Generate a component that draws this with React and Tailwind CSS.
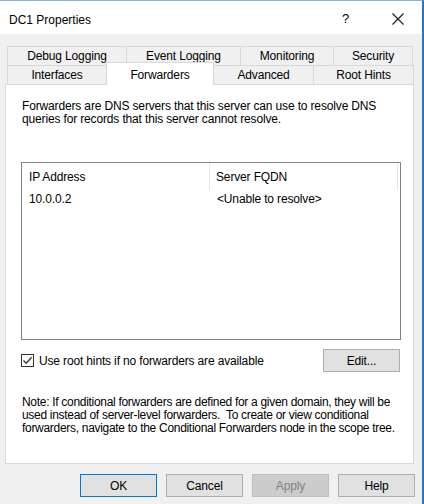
import React from "react";

const F = { fontFamily: '"Liberation Sans", Arial, sans-serif' };

function Tab({ w, children, selected }) {
  if (selected) {
    return (
      <div className={`${w} h-[23px] -mt-[3px] bg-white border border-b-0 border-[#d9d9d9] flex items-start justify-center pt-[3px] relative z-10 -mb-px`}>
        {children}
      </div>
    );
  }
  return (
    <div className={`${w} h-[20px] bg-[#f0f0f0] border border-[#d9d9d9] -ml-px first:ml-0 flex items-center justify-center`}>
      {children}
    </div>
  );
}

function Btn({ children, primary, disabled, w = "w-[77px]" }) {
  return (
    <div
      className={`${w} h-[23px] flex items-center justify-center border ${
        primary
          ? "border-[#0078d7] bg-[#e1e1e1] text-black"
          : disabled
          ? "border-[#bfbfbf] bg-[#cccccc] text-[#838383]"
          : "border-[#adadad] bg-[#e1e1e1] text-black"
      }`}
    >
      {children}
    </div>
  );
}

export default function App() {
  return (
    <div
      style={F}
      className="w-[424px] h-[504px] bg-[#f0f0f0] text-[12px] tracking-[-0.15px] text-black border-t border-t-[#7fb2e5] border-r-2 border-r-[#1979ca] overflow-hidden whitespace-nowrap"
    >
      {/* title bar */}
      <div className="h-[33px] bg-white flex items-center pl-[9px] pr-[16px]">
        <span className="text-[12px] mt-[4px] tracking-normal">DC1 Properties</span>
        <span className="ml-auto mr-[43px] text-[13px] mt-[2px]">?</span>
        <svg width="12" height="12" viewBox="0 0 12 12" className="mt-[2px] mr-[2px]">
          <path d="M0.5 0.5 L11.5 11.5 M11.5 0.5 L0.5 11.5" stroke="#1a1a1a" strokeWidth="1.1" />
        </svg>
      </div>

      {/* tabs */}
      <div className="pl-[7px] pt-[12px]">
        <div className="flex">
          <Tab w="w-[120px]">Debug Logging</Tab>
          <Tab w="w-[115px]">Event Logging</Tab>
          <Tab w="w-[94px]">Monitoring</Tab>
          <Tab w="w-[80px]">Security</Tab>
        </div>
        <div className="flex -mt-px">
          <div className="w-[99px] h-[20px] bg-[#f0f0f0] border border-[#d9d9d9] border-r-0 flex items-center justify-center">Interfaces</div>
          <Tab w="w-[108px]" selected>Forwarders</Tab>
          <div className="w-[100px] h-[20px] bg-[#f0f0f0] border border-[#d9d9d9] border-l-0 flex items-center justify-center">Advanced</div>
          <div className="w-[101px] h-[20px] bg-[#f0f0f0] border border-[#d9d9d9] -ml-px flex items-center justify-center">Root Hints</div>
        </div>
      </div>

      {/* panel */}
      <div className="ml-[5px] w-[409px] h-[380px] bg-white border border-[#d9d9d9] -mt-px pl-[15px] pr-[12px] pt-[15px] flex flex-col">
        <p className="leading-[13px] pl-[1px]">
          Forwarders are DNS servers that this server can use to resolve DNS
          <br />
          queries for records that this server cannot resolve.
        </p>

        <div className="mt-[36px] w-[380px] h-[178px] border border-[#828282] flex flex-col">
          <div className="flex h-[27px] items-center">
            <div className="w-[188px] pl-[7px] h-full flex items-center border-r border-[#e5e5e5]">IP Address</div>
            <div className="w-[188px] pl-[6px] h-full flex items-center border-r border-[#e5e5e5]">Server FQDN</div>
          </div>
          <div className="flex h-[17px] items-center">
            <div className="w-[188px] pl-[7px]">10.0.0.2</div>
            <div className="pl-[7px]">&lt;Unable to resolve&gt;</div>
          </div>
        </div>

        <div className="mt-[9px] flex items-center w-[379px]">
          <div className="w-[13px] h-[13px] border border-[#333333] flex items-center justify-center">
            <svg width="11" height="11" viewBox="0 0 11 11">
              <path d="M1.5 5.5 L4.2 8.3 L9.6 2.3" stroke="#333333" strokeWidth="1.3" fill="none" />
            </svg>
          </div>
          <span className="ml-[5px]">Use root hints if no forwarders are available</span>
          <div className="ml-auto">
            <Btn>Edit...</Btn>
          </div>
        </div>

        <p className="mt-[24px] leading-[13px] pl-[1px] tracking-[-0.3px]">
          Note: If conditional forwarders are defined for a given domain, they will be
          <br />
          used instead of server-level forwarders.&nbsp; To create or view conditional
          <br />
          forwarders, navigate to the Conditional Forwarders node in the scope tree.
        </p>
      </div>

      {/* buttons */}
      <div className="flex justify-end gap-[9px] pr-[7px] mt-[10px]">
        <Btn primary>OK</Btn>
        <Btn>Cancel</Btn>
        <Btn disabled>Apply</Btn>
        <Btn>Help</Btn>
      </div>
    </div>
  );
}
